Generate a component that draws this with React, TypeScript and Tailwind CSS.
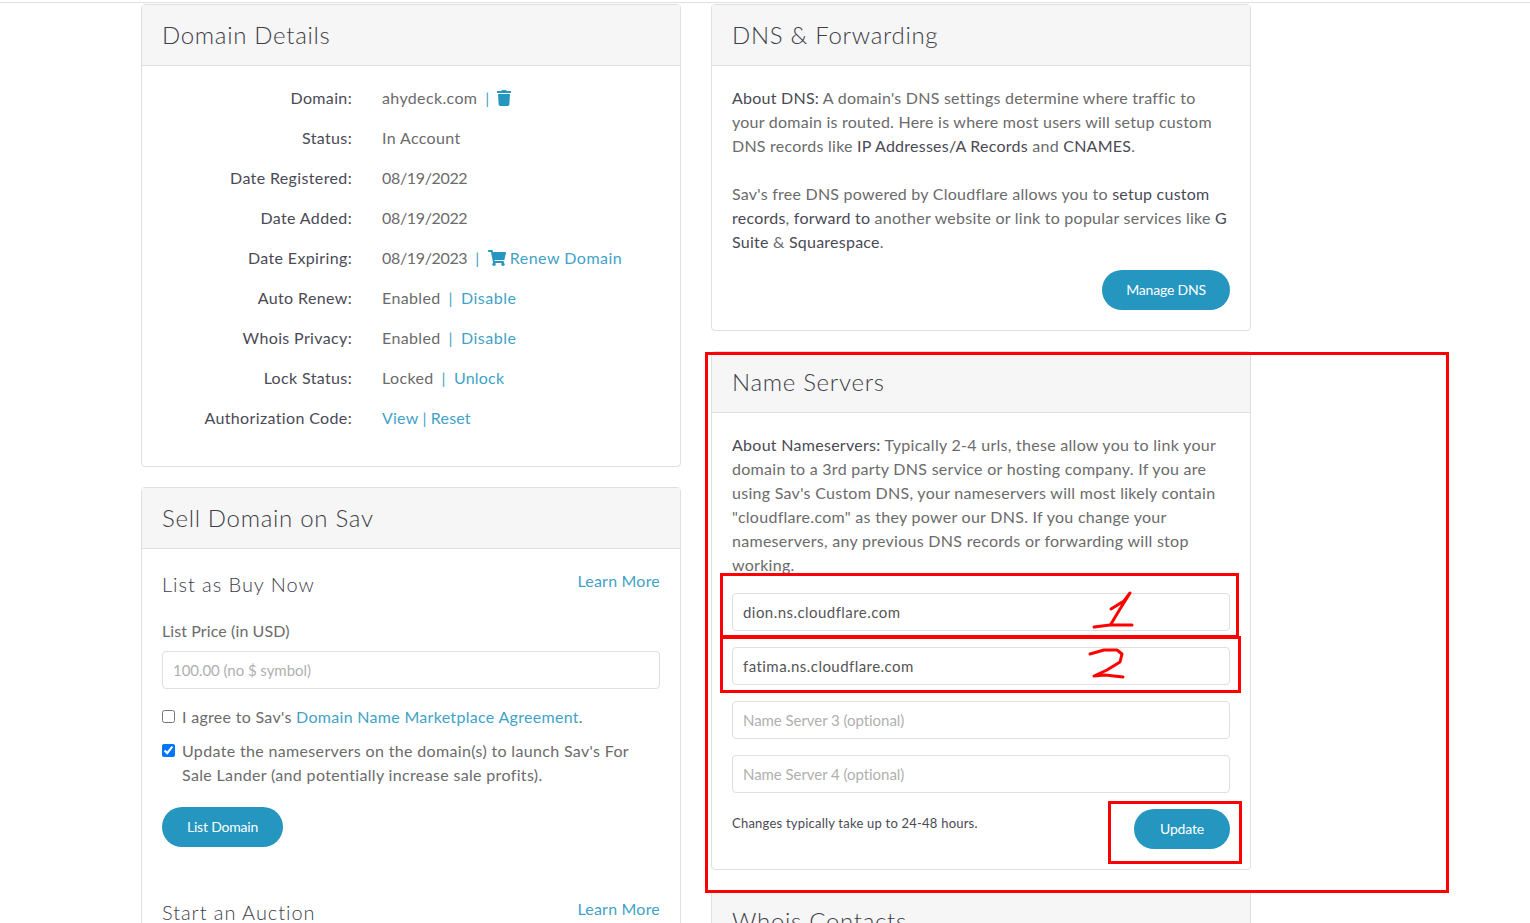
import React from "react";
import { FaTrash, FaShoppingCart } from "react-icons/fa";

const LINK = "text-[#3fa3c7] tracking-[0.5px]";
const LINK_TIGHT = "text-[#3fa3c7] tracking-[0.2px]";
const STRONG = "text-[#4a4a55]";

function Card({ title, children, className = "" }: { title: string; children?: React.ReactNode; className?: string }) {
  return (
    <section className={`rounded border border-[#dfdfdf] bg-white ${className}`}>
      <h2 className="flex h-[61px] items-center border-b border-[#dfdfdf] bg-[#f6f6f6] px-5 text-2xl font-light tracking-[0.7px] text-[#3d3d48]">
        {title}
      </h2>
      {children}
    </section>
  );
}

function Row({ label, children }: { label: string; children: React.ReactNode }) {
  return (
    <div className="mb-4 flex h-6 items-center">
      <div className="w-[190px] text-right text-[#4a4a55]">{label}</div>
      <div className="ml-[30px] flex items-center">{children}</div>
    </div>
  );
}

const Sep = () => <span className="mx-2 text-[#3fa3c7]">|</span>;
const Date_ = ({ children }: { children: React.ReactNode }) => <span className="tracking-[-0.34px]">{children}</span>;

function Input({ value, placeholder }: { value?: string; placeholder?: string }) {
  return value ? (
    <div className="flex h-[38px] items-center rounded border border-[#dfdfdf] px-[10px] text-[15px] tracking-[0.45px] text-[#555]">{value}</div>
  ) : (
    <div className="flex h-[38px] items-center rounded border border-[#dfdfdf] px-[10px] text-[15px] tracking-[-0.05px] text-[#b0b0b0]">{placeholder}</div>
  );
}

function Button({ children, className = "" }: { children: React.ReactNode; className?: string }) {
  return (
    <button className={`flex h-10 items-center justify-center rounded-full bg-[#2496bf] pb-px text-sm tracking-[-0.2px] text-white ${className}`}>
      {children}
    </button>
  );
}

export default function App() {
  return (
    <div
      className="relative h-[923px] overflow-hidden bg-white text-base leading-6 tracking-[0.36px] text-[#6b6b6b]"
      style={{ fontFamily: '"Lato", "Open Sans", sans-serif' }}
    >
      <div className="h-[3px] border-b border-[#dfdfdf]" />
      <div className="flex gap-[30px] pl-[141px] pt-[1px]">
        <div className="flex w-[540px] flex-col gap-5">
          <Card title="Domain Details">
            <div className="px-5 pb-5 pt-5">
              <Row label="Domain:">
                <span>ahydeck.com</span>
                <Sep />
                <FaTrash className="-ml-px h-4 w-[14px] text-[#2496bf]" />
              </Row>
              <Row label="Status:"><span>In Account</span></Row>
              <Row label="Date Registered:"><Date_>08/19/2022</Date_></Row>
              <Row label="Date Added:"><Date_>08/19/2022</Date_></Row>
              <Row label="Date Expiring:">
                <Date_>08/19/2023</Date_>
                <Sep />
                <FaShoppingCart className="h-4 w-[18px] text-[#2496bf]" />
                <a className={`ml-1 ${LINK}`}>Renew Domain</a>
              </Row>
              <Row label="Auto Renew:">
                <span>Enabled</span>
                <Sep />
                <a className={LINK}>Disable</a>
              </Row>
              <Row label="Whois Privacy:">
                <span>Enabled</span>
                <Sep />
                <a className={LINK}>Disable</a>
              </Row>
              <Row label="Lock Status:">
                <span>Locked</span>
                <Sep />
                <a className={LINK_TIGHT}>Unlock</a>
              </Row>
              <Row label="Authorization Code:">
                <a className={LINK_TIGHT}>View</a>
                <span className="mx-1 text-[#3fa3c7]">|</span>
                <a className={LINK_TIGHT}>Reset</a>
              </Row>
            </div>
          </Card>

          <Card title="Sell Domain on Sav">
            <div className="px-5 pt-[19px]">
              <div className="flex items-start justify-between">
                <h3 className="text-xl font-light leading-8 tracking-[0.95px] text-[#3d3d48]">List as Buy Now</h3>
                <a className={`mt-px ${LINK_TIGHT}`}>Learn More</a>
              </div>
              <div className="mt-[19px] tracking-[0.1px]">List Price (in USD)</div>
              <div className="mt-2"><Input placeholder="100.00 (no $ symbol)" /></div>
              <label className="mt-4 flex items-start">
                <input type="checkbox" readOnly className="mr-[7px] mt-[5px] h-[13px] w-[13px]" />
                <span className="tracking-[0.3px]">
                  I agree to Sav's <a className="text-[#3fa3c7]">Domain Name Marketplace Agreement</a>.
                </span>
              </label>
              <label className="mt-[10px] flex items-start">
                <input type="checkbox" checked readOnly className="mr-[7px] mt-[5px] h-[13px] w-[13px]" />
                <span className="tracking-[0.34px]">Update the nameservers on the domain(s) to launch Sav's For Sale Lander (and potentially increase sale profits).</span>
              </label>
              <Button className="mt-5 w-[121px]">List Domain</Button>
              <div className="mt-[49px] flex items-start justify-between">
                <h3 className="text-xl font-light leading-8 tracking-[0.95px] text-[#3d3d48]">Start an Auction</h3>
                <a className={`mt-px ${LINK_TIGHT}`}>Learn More</a>
              </div>
            </div>
          </Card>
        </div>

        <div className="flex w-[540px] flex-col gap-5">
          <Card title="DNS & Forwarding">
            <div className="px-5 pb-5 pt-5 tracking-[0.24px]">
              <p>
                <span className={STRONG}>About DNS:</span> A domain's DNS settings determine where traffic to your domain is routed. Here is where most users will setup custom DNS records like{" "}
                <span className={STRONG}>IP Addresses/A Records</span> and <span className={STRONG}>CNAMES</span>.
              </p>
              <p className="mt-6">
                Sav's free DNS powered by Cloudflare allows you to <span className={STRONG}>setup custom records</span>, <span className={STRONG}>forward to</span> another website or link to popular services like{" "}
                <span className={STRONG}>G Suite</span> &amp; <span className={STRONG}>Squarespace</span>.
              </p>
              <div className="mt-4 flex justify-end">
                <Button className="w-32">Manage DNS</Button>
              </div>
            </div>
          </Card>

          <Card title="Name Servers">
            <div className="px-5 pb-5 pt-5">
              <p className="tracking-[0.28px]">
                <span className={STRONG}>About Nameservers:</span> Typically 2-4 urls, these allow you to link your domain to a 3rd party DNS service or hosting company. If you are using Sav's Custom DNS, your nameservers will most likely contain "cloudflare.com" as they power our DNS. If you change your nameservers, any previous DNS records or forwarding will stop working.
              </p>
              <div className="mt-4 flex flex-col gap-4">
                <Input value="dion.ns.cloudflare.com" />
                <Input value="fatima.ns.cloudflare.com" />
                <Input placeholder="Name Server 3 (optional)" />
                <Input placeholder="Name Server 4 (optional)" />
              </div>
              <div className="mt-4 flex items-start justify-between">
                <span className="text-[13px] leading-[28px] tracking-[0.22px] text-[#4a4a55]">Changes typically take up to 24-48 hours.</span>
                <Button className="w-24">Update</Button>
              </div>
            </div>
          </Card>

          <Card title="Whois Contacts" />
        </div>
      </div>

      {/* hand-drawn red annotations */}
      <div className="absolute left-[705px] top-[352px] h-[541px] w-[744px] border-[3px] border-[#f00]" />
      <div className="absolute left-[720px] top-[573px] h-[65px] w-[519px] border-[3px] border-[#f00]" />
      <div className="absolute left-[720px] top-[636px] h-[57px] w-[521px] border-[3px] border-[#f00]" />
      <div className="absolute left-[1108px] top-[801px] h-[63px] w-[134px] border-[3px] border-[#f00]" />
      <svg className="absolute left-0 top-0" width="1530" height="923" fill="none" stroke="#f00" strokeWidth="3" strokeLinecap="round" strokeLinejoin="round">
        <path d="M1111 609 L1124 601 L1130 593 L1120 609 L1111 624" />
        <path d="M1094 627 L1110 625 L1132 625" />
        <path d="M1090 654 L1104 650 L1117 650 L1122 654 L1120 662 L1107 670 L1094 676 L1105 675 L1123 677" />
      </svg>
    </div>
  );
}
